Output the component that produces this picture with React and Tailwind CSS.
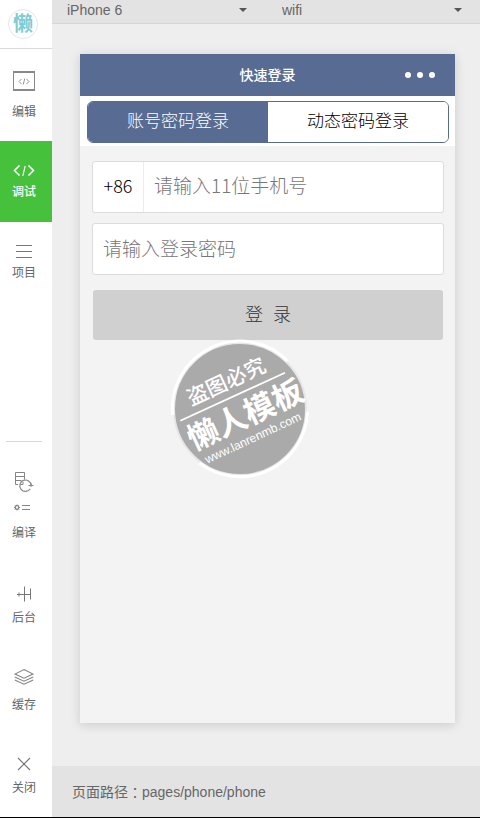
import { useState } from 'react'
import clsx from 'clsx'

const LogoMark = () => (
  <span className="flex size-[30px] items-center justify-center rounded-full border border-gray-200 bg-white pb-0.5 font-['Noto_Sans_CJK_SC',sans-serif] text-xl leading-none font-bold text-[#7fccd4]">
    懒
  </span>
)

const EditIcon = () => (
  <svg width="24" height="20" viewBox="0 0 24 20" fill="none" stroke="#888">
    <path d="M1.5 1v18M22.5 1v18" />
    <path d="M1 1h22M1 19h22" strokeWidth="2" />
    <path d="M9.5 8L7 10.5 9.5 13M14.5 8l2.5 2.500-2.500 2.500M12.800 7.500l-1.600 6" strokeWidth="0.900" />
  </svg>
)

const DebugIcon = () => (
  <svg width="22" height="20" viewBox="0 0 22 20" fill="none" stroke="#fff">
    <path d="M6.500 4.500L1.500 9.500l5 5M15.500 4.500l5 5-5 5" strokeWidth="1.600" />
    <path d="M12.200 5l-2.400 10" strokeWidth="1.100" />
  </svg>
)

const ProjectIcon = () => (
  <svg width="16" height="20" viewBox="0 0 16 20" stroke="#777">
    <path d="M0 3.500h16M0 9.500h16M0 15.500h16" />
  </svg>
)

const CompileIcon = () => (
  <svg width="24" height="44" viewBox="0 0 24 44" fill="none" stroke="#858585">
    <path d="M6 13.500H3.500v-12h9v7M3.500 5.500h9M3.500 9.500h6" />
    <path d="M18.300 17.800A5.700 5.700 0 1 1 19.200 14.500" strokeWidth="1.200" />
    <path d="M16.500 14.500h5M19 12.500v3.500" />
    <path d="M8.500 13.500h2.500v-2.500" />
    <circle cx="5" cy="36.500" r="1.800" strokeWidth="1.300" />
    <path d="M5 33.500v1M5 38.500v1M2 36.500h1M7 36.500h1M3 34.500l.7.7M6.300 37.800l.7.7M7 34.500l-.7.7M3.700 37.800l-.7.7" />
    <path d="M10 34.500h8M10 38.500h8" />
  </svg>
)

const BackgroundIcon = () => (
  <svg width="16" height="20" viewBox="0 0 16 20" fill="none" stroke="#777">
    <path d="M8.500 2.500v15M14.500 4.500v11M9 10.500h6M1 10.500h7" />
    <path d="M3 8.500v4" />
  </svg>
)

const CacheIcon = () => (
  <svg width="20" height="20" viewBox="0 0 20 20" fill="none" stroke="#858585" strokeWidth="1.100">
    <path d="M10 2.500L19 7l-9 4.200L1 7z" />
    <path d="M.800 10l9.200 4.200L19.200 10M.800 13l9.200 4.200L19.200 13" />
  </svg>
)

const CloseIcon = () => (
  <svg width="14" height="20" viewBox="0 0 14 20" stroke="#777" strokeWidth="1.100">
    <path d="M1 4l12 12M13 4L1 16" />
  </svg>
)

const SideButton = ({ icon, label, active, className }) => (
  <button
    type="button"
    className={clsx(
      'flex w-full flex-col items-center text-xs leading-5',
      active ? 'bg-[#46c13c] font-medium text-white' : 'text-[#666]',
      className,
    )}
  >
    {icon}
    <span>{label}</span>
  </button>
)

const Sidebar = () => (
  <aside className="flex w-[52px] shrink-0 flex-col bg-white">
    <div className="flex h-[49px] items-center justify-center border-b border-[#d9d9d9] pr-1.5">
      <LogoMark />
    </div>
    <nav className="flex flex-1 flex-col justify-between">
      <div>
        <SideButton icon={<EditIcon />} label="编辑" className="gap-[11px] pt-[22px] pb-[19px] pr-1" />
        <SideButton icon={<DebugIcon />} label="调试" active className="gap-px pt-5 pb-5 pr-1" />
        <SideButton icon={<ProjectIcon />} label="项目" className="gap-px pt-5 pb-5 pr-1" />
      </div>
      <div>
        <div className="mr-2.5 ml-1.5 border-t border-[#d6d6d6]" />
        <div className="flex flex-col gap-[39px] pt-[29px] pr-1 pb-[19px]">
          <SideButton icon={<CompileIcon />} label="编译" className="gap-2 pb-0.5" />
          <SideButton icon={<BackgroundIcon />} label="后台" className="gap-1" />
          <SideButton icon={<CacheIcon />} label="缓存" className="gap-2" />
          <SideButton icon={<CloseIcon />} label="关闭" className="gap-1" />
        </div>
      </div>
    </nav>
  </aside>
)

const ToolbarSelect = ({ label, options, className }) => (
  <div className={clsx('relative', className)}>
    <select
      aria-label={label}
      className="block w-full appearance-none bg-transparent text-sm leading-5 text-[#666] outline-none"
    >
      {options.map((option) => (
        <option key={option}>{option}</option>
      ))}
    </select>
    <svg className="pointer-events-none absolute top-2 right-0" width="8" height="4" viewBox="0 0 8 4">
      <path d="M0 0h8L4 4z" fill="#555" />
    </svg>
  </div>
)

const Stamp = () => (
  <svg
    className="pointer-events-none absolute top-full left-[77px] overflow-visible font-['Noto_Sans_CJK_SC',sans-serif]"
    width="140"
    height="138"
    viewBox="0 1 140 138"
    fill="#fff"
    textAnchor="middle"
  >
    <circle cx="70" cy="70" r="66" fill="#aaa" stroke="#e6e6e6" strokeWidth="2" />
    <g fill="none" stroke="#fff">
      <path d="M2.700 76A67.500 67.500 0 0 1 117.700 22" strokeWidth="3" />
      <path d="M137.500 72.700A67.500 67.500 0 0 1 29.300 124" strokeWidth="3" />
      <path d="M10.300 81.700L115 33.700" strokeWidth="1.800" />
    </g>
    <text transform="translate(56 42) rotate(-25)" y="8" fontSize="21" fontWeight="500">盗图必究</text>
    <text transform="translate(75 75) rotate(-25)" y="12" fontSize="31" fontWeight="700">懒人模板</text>
    <text transform="translate(83 99) rotate(-25)" y="4" fontSize="12" fontFamily="Liberation Sans">
      www.lanrenmb.com
    </text>
  </svg>
)

const tabs = ['账号密码登录', '动态密码登录']

const Phone = () => {
  const [tab, setTab] = useState(0)

  return (
    <section className="flex flex-1 flex-col bg-[#f3f3f3] shadow-[0_2px_10px_rgba(0,0,0,0.15)]">
      <header className="grid h-[42px] grid-cols-3 items-center bg-[#586b93] text-white">
        <h1 className="col-start-2 text-center text-sm font-medium">快速登录</h1>
        <button type="button" aria-label="更多" className="mr-5 flex gap-1.5 justify-self-end">
          <i className="size-1.5 rounded-full bg-white" />
          <i className="size-1.5 rounded-full bg-white" />
          <i className="size-1.5 rounded-full bg-white" />
        </button>
      </header>

      <div className="bg-white pt-[5px] pr-1.5 pb-[3px] pl-[7px]">
        <div className="flex h-[42px] overflow-hidden rounded-md border border-[#586b93]">
          {tabs.map((name, index) => (
            <button
              key={name}
              type="button"
              onClick={() => setTab(index)}
              className={clsx(
                'flex-1 text-[17px] font-light',
                tab === index ? 'bg-[#586b93] text-white' : 'bg-white text-black',
              )}
            >
              {name}
            </button>
          ))}
        </div>
      </div>

      <form
        className="pt-[15px] pr-[11px] pl-3 font-['Noto_Sans_CJK_SC',sans-serif] font-light"
        onSubmit={(event) => event.preventDefault()}
      >
        <div className="flex h-[52px] overflow-hidden rounded-[3px] border border-[#dcdcdc] bg-white text-[19px]">
          <label htmlFor="phone" className="flex w-[51px] items-center justify-center border-r border-[#ececec] pb-1 text-lg text-black">
            +86
          </label>
          <input
            id="phone"
            type="tel"
            placeholder="请输入11位手机号"
            className="min-w-0 flex-1 px-2.5 pb-1 outline-none placeholder:text-[#777]"
          />
        </div>
        <input
          type="password"
          aria-label="登录密码"
          placeholder="请输入登录密码"
          className="mt-2.5 h-[52px] w-full rounded-[3px] border border-[#dcdcdc] bg-white px-2.5 pb-1 text-[19px] outline-none placeholder:text-[#777]"
        />
        <div className="relative mx-px mt-[15px]">
          <button type="submit" className="block h-[50px] w-full rounded-[3px] bg-[#d0d0d0] pb-1 text-lg font-light text-[#333]">
            <span className="mr-2.5">登</span>
            <span>录</span>
          </button>
          <Stamp />
        </div>
      </form>
    </section>
  )
}

const App = () => (
  <div className="flex min-h-screen border-b border-black bg-[#eee] font-['Liberation_Sans','Noto_Sans_CJK_SC',sans-serif]">
    <Sidebar />
    <main className="flex min-w-0 flex-1 flex-col">
      <div className="flex h-6 border-b border-[#d6d6d6] bg-[#e3e3e3] pr-[18px] pl-[15px]">
        <ToolbarSelect label="机型" options={['iPhone 6', 'iPhone 5', 'iPhone 6 Plus']} className="mr-[35px] flex-1" />
        <ToolbarSelect label="网络" options={['wifi', '4g', '3g', '2g']} className="flex-1" />
      </div>
      <div className="flex flex-1 flex-col pt-[30px] pr-[25px] pb-[43px] pl-7">
        <Phone />
      </div>
      <footer className="flex h-[51px] items-center bg-[#e3e3e3] px-5 text-sm text-[#666]">
        <span>页面路径</span>
        <span className="font-['Noto_Sans_CJK_TC',sans-serif]" lang="zh-TW">：</span>
        <span>pages/phone/phone</span>
      </footer>
    </main>
  </div>
)

export default App
